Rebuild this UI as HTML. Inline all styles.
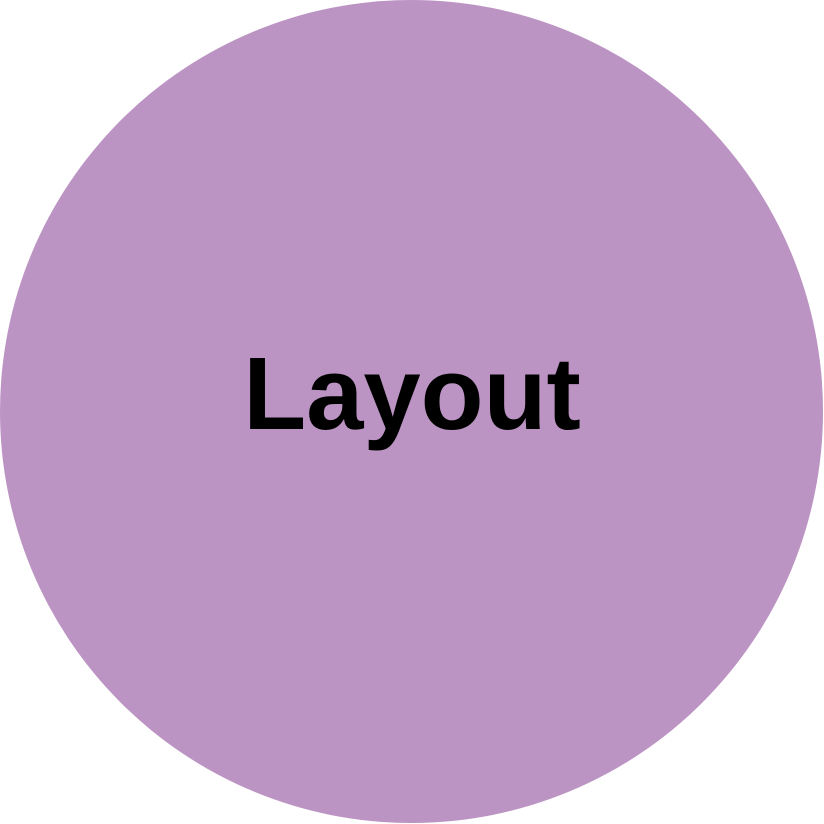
<!DOCTYPE html>
<html><head><meta charset="utf-8"><style>
html,body{margin:0;padding:0;background:#fff;}
body{width:824px;height:824px;position:relative;overflow:hidden;}
.c{position:absolute;left:0;top:0;width:823px;height:823px;border-radius:50%;background:#bc94c3;}
.t{position:absolute;left:0;width:824px;text-align:center;top:342px;font:bold 103px/1 "Liberation Sans",sans-serif;color:#000;}
</style></head><body>
<div class="c"></div>
<div class="t">Layout</div>
</body></html>
